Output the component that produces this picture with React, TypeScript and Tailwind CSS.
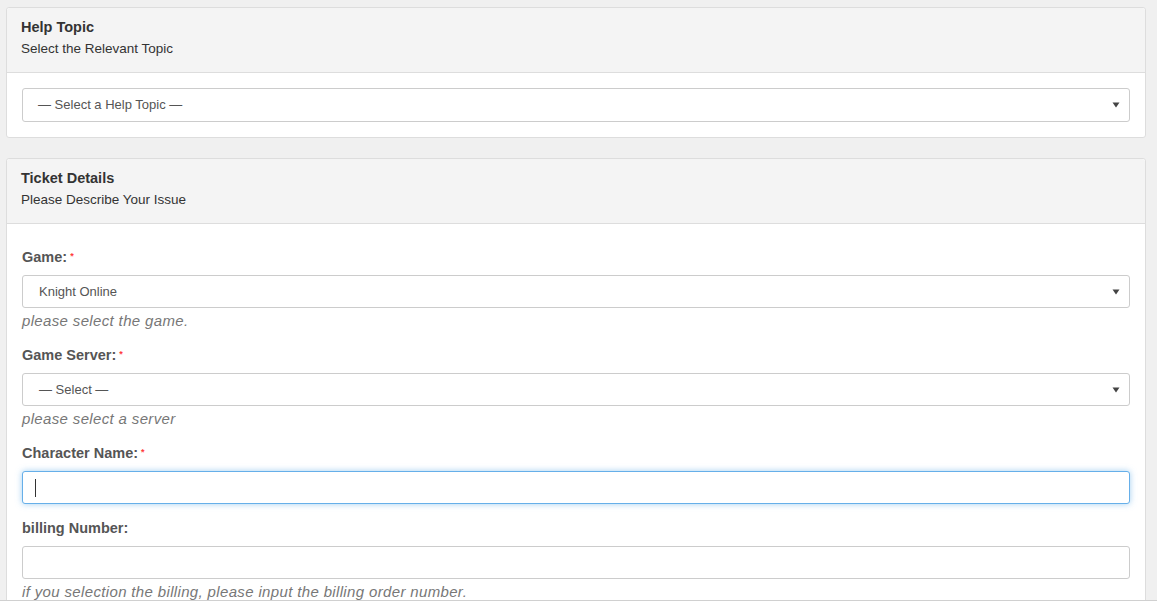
import type { ReactNode } from 'react';

const FONT = "font-['Liberation_Sans',Arial,sans-serif]";

function Card({ title, subtitle, children }: { title: string; subtitle: string; children: ReactNode }) {
  return (
    <section className="w-[1140px] rounded-[3px] border border-[#dddddd] bg-white">
      {/* header strip */}
      <div className="h-[65px] rounded-t-[3px] border-b border-[#dddddd] bg-[#f4f4f4] px-[14px] pt-[9px]">
        <h2 className="text-[14.5px] leading-[20px] font-bold text-[#333333]">{title}</h2>
        <p className="mt-[3px] text-[13.5px] leading-[18px] text-[#333333]">{subtitle}</p>
      </div>
      {children}
    </section>
  );
}

function Caret() {
  return (
    <svg width="8" height="6" viewBox="0 0 8 6" aria-hidden="true">
      <path d="M0.5 0.5h7L4 5.5z" fill="#444444" />
    </svg>
  );
}

function FakeSelect({ value, tall }: { value: string; tall?: boolean }) {
  return (
    <div
      className={`flex w-full items-center justify-between rounded-[3px] border border-[#cccccc] bg-white pr-[9px] text-[13px] text-[#555555] ${
        tall ? 'h-[34px] pl-[15px]' : 'h-[33px] pl-[16px]'
      }`}
    >
      <span>{value}</span>
      <Caret />
    </div>
  );
}

function Label({ children, required }: { children: ReactNode; required?: boolean }) {
  return (
    <label className="flex h-[20px] items-center text-[14.5px] font-bold text-[#555555]">
      {children}
      {required && <span className="ml-[3px] -mt-[2px] text-[9px] text-[#ff3b3b]">*</span>}
    </label>
  );
}

function Help({ children }: { children: ReactNode }) {
  return (
    <p className="mt-[3px] h-[20px] text-[15px] leading-[20px] tracking-[0.35px] italic text-[#777777]">
      {children}
    </p>
  );
}

export default function App() {
  return (
    <div className={`h-[601px] overflow-hidden border-b border-[#d0d0d0] bg-[#f0f0f0] pl-[6px] pt-[7px] ${FONT}`}>
      <Card title="Help Topic" subtitle="Select the Relevant Topic">
        <div className="px-[15px] pt-[15px] pb-[15px]">
          <FakeSelect value="— Select a Help Topic —" tall />
        </div>
      </Card>

      <div className="mt-[20px]">
        <Card title="Ticket Details" subtitle="Please Describe Your Issue">
          <div className="px-[15px] pt-[24px]">
            <Label required>Game:</Label>
            <div className="mt-[7px]">
              <FakeSelect value="Knight Online" />
            </div>
            <Help>please select the game.</Help>

            <div className="mt-[15px]">
              <Label required>Game Server:</Label>
            </div>
            <div className="mt-[7px]">
              <FakeSelect value="— Select —" />
            </div>
            <Help>please select a server</Help>

            <div className="mt-[15px]">
              <Label required>Character Name:</Label>
            </div>
            {/* focused input with the text caret frozen in place */}
            <div className="mt-[7px] flex h-[33px] w-full items-center rounded-[3px] border border-[#66afe9] bg-white pl-[12px] shadow-[0_0_6px_rgba(102,175,233,0.6)]">
              <span className="h-[18px] w-px bg-[#333333]" />
            </div>

            <div className="mt-[15px]">
              <Label>billing Number:</Label>
            </div>
            <div className="mt-[7px] h-[33px] w-full rounded-[3px] border border-[#cccccc] bg-white" />
            <Help>if you selection the billing, please input the billing order number.</Help>
            <div className="h-[40px]" />
          </div>
        </Card>
      </div>
    </div>
  );
}
